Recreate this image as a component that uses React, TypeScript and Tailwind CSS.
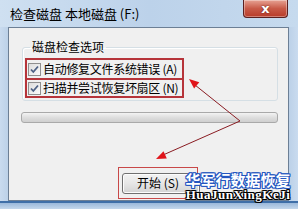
import React from "react";

const cjk = "font-['Noto_Sans_CJK_SC','Noto_Sans',sans-serif]";

function Check() {
  return (
    <span className="flex h-[13px] w-[13px] shrink-0 items-center justify-center border border-[#8f8f8f] bg-gradient-to-br from-[#dcdcdc] to-[#fbfbfb]">
      <svg width="11" height="11" viewBox="0 0 11 11">
        <path d="M2 5.5 L4.3 8 L9 2.5" fill="none" stroke="#4d6185" strokeWidth="1.8" />
      </svg>
    </span>
  );
}

export default function App() {
  return (
    <div className={`relative h-[209px] w-[298px] overflow-hidden bg-[#c3d7ec] ${cjk}`}>
      {/* title bar */}
      <div className="flex h-[27px] items-start bg-gradient-to-r from-[#cfe0f1] via-[#bcd2ea] to-[#c6daee]">
        <div className="mt-[7px] pl-[10px] text-[13px] leading-[14px] text-black">检查磁盘 本地磁盘 (F:)</div>
        <div className="ml-auto mr-[10px] flex h-[18px] w-[45px] items-center justify-center rounded-b-[4px] border border-t-0 border-[#5b2020] bg-gradient-to-b from-[#e6a294] via-[#c85a48] to-[#b83a28] shadow-[inset_0_0_0_1px_rgba(255,255,255,0.35)]">
          <span className="font-['DejaVu_Sans',sans-serif] text-[13px] font-bold leading-none text-white [text-shadow:0_0_2px_#5a1010]">x</span>
        </div>
      </div>

      <div className="flex h-[174px]">
        <div className="w-[8px] bg-gradient-to-r from-[#c9dbef] to-[#bcd1e8]" />
        {/* client panel */}
        <div className="flex w-[281px] flex-col border border-[#6c7f95] bg-[#f0f0f0] pl-[13px] pt-[12px]">
          <fieldset className="h-[61px] w-[256px] rounded-[3px] border border-[#d5dfe5] px-[2px] shadow-[inset_1px_1px_0_#fff]">
            <legend className="ml-[5px] px-[2px] text-[12px] leading-[14px] text-black">磁盘检查选项</legend>
            <div className="mt-[4px] flex w-[159px] flex-col">
              <div className="flex h-[20px] items-center gap-[2px] whitespace-nowrap border-2 border-b-0 border-[#b6343a] pl-[1px] text-[12px] tracking-[-0.3px] text-black">
                <Check />
                <span>自动修复文件系统错误 (A)</span>
              </div>
              <div className="flex h-[20px] items-center gap-[2px] whitespace-nowrap border-2 border-[#b6343a] pl-[1px] text-[12px] tracking-[-0.3px] text-black">
                <Check />
                <span>扫描并尝试恢复坏扇区 (N)</span>
              </div>
            </div>
          </fieldset>

          {/* progress bar */}
          <div className="ml-[-1px] mt-[11px] h-[11px] w-[257px] rounded-[3px] border border-[#a9a9a9] bg-gradient-to-b from-[#f3f3f3] via-[#dedede] to-[#cfcfcf]" />

          {/* start button with annotation box */}
          <div className="ml-[96px] mt-[44px] flex h-[32px] w-[80px] items-center border border-[#c84848] pl-[3px]">
            <div className="flex h-[21px] w-[78px] shrink-0 items-center justify-start rounded-[3px] border border-[#707070] bg-gradient-to-b from-[#f3f3f3] via-[#e6e6e6] to-[#d3d3d3] pl-[14px] text-[12px] text-black shadow-[inset_0_0_0_1px_#fcfcfc]">
              开始 (S)
            </div>
          </div>
        </div>
        <div className="w-[9px] bg-gradient-to-r from-[#bcd1e8] to-[#c9dbef]" />
      </div>
      <div className="h-[8px] border-t-2 border-[#3f6fa8] bg-gradient-to-b from-[#9ab8da] to-[#c3d7ec]" />

      {/* annotation arrows */}
      <svg className="pointer-events-none absolute left-0 top-0" width="298" height="209" viewBox="0 0 298 209">
        <line x1="240" y1="121" x2="195" y2="85" stroke="#8a1c22" strokeWidth="1" />
        <line x1="240" y1="121" x2="163" y2="155" stroke="#8a1c22" strokeWidth="1" />
        <polygon points="189,79 194.1,88.5 199.3,82.3" fill="#e0141a" />
        <polygon points="156,159 166.8,158.5 163.5,151.3" fill="#e0141a" />
      </svg>

      {/* watermark */}
      <div className="absolute left-[185px] top-[171px] flex w-[106px] flex-col items-center">
        <div className="text-[15px] font-bold leading-[17px] tracking-[0px] text-white [text-shadow:1px_0_#2456c0,-1px_0_#2456c0,0_1px_#2456c0,0_-1px_#2456c0,1px_1px_#2456c0,-1px_-1px_#2456c0,1px_-1px_#2456c0,-1px_1px_#2456c0]">
          华军行数据恢复
        </div>
        <div className="font-['Liberation_Serif',serif] text-[13px] font-bold leading-[13px] tracking-[0.5px] text-white [text-shadow:1px_0_#000,-1px_0_#000,0_1px_#000,0_-1px_#000,1px_1px_#000,-1px_-1px_#000,1px_-1px_#000,-1px_1px_#000]">
          HuaJunXingKeJi
        </div>
      </div>
    </div>
  );
}
